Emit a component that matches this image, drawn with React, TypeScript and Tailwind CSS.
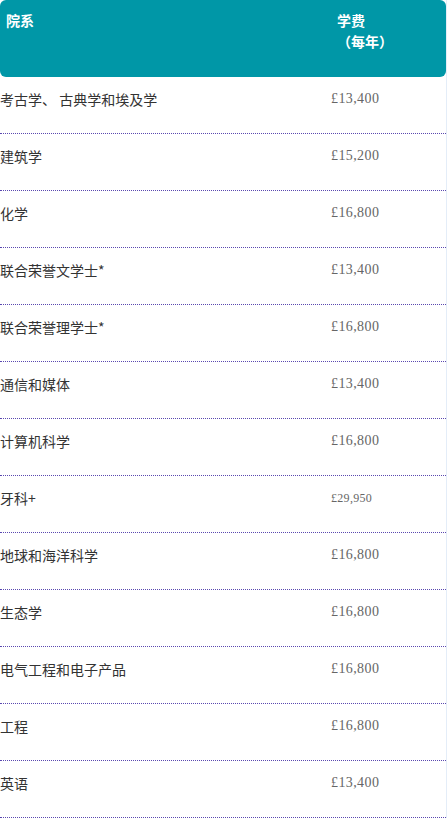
import React from "react";

const rows: { name: string; fee: string; small?: boolean }[] = [
  { name: "考古学、 古典学和埃及学", fee: "£13,400" },
  { name: "建筑学", fee: "£15,200" },
  { name: "化学", fee: "£16,800" },
  { name: "联合荣誉文学士*", fee: "£13,400" },
  { name: "联合荣誉理学士*", fee: "£16,800" },
  { name: "通信和媒体", fee: "£13,400" },
  { name: "计算机科学", fee: "£16,800" },
  { name: "牙科+", fee: "£29,950", small: true },
  { name: "地球和海洋科学", fee: "£16,800" },
  { name: "生态学", fee: "£16,800" },
  { name: "电气工程和电子产品", fee: "£16,800" },
  { name: "工程", fee: "£16,800" },
  { name: "英语", fee: "£13,400" },
];

const cjk = { fontFamily: '"Noto Sans CJK SC", "Noto Sans", sans-serif' };
const serif = { fontFamily: '"Liberation Serif", "Noto Sans CJK SC", serif' };

export default function App() {
  return (
    <div className="w-[448px] h-[818px] bg-white overflow-hidden">
      <div className="w-[447px] border-r border-[#e4edf8] h-[818px]">
        <div className="w-[446px] h-[77px] bg-[#0097a7] rounded-[6px] flex text-white font-bold text-[14px] leading-[21px] pt-[10px]" style={cjk}>
          <div className="w-[331px] pl-[6px]">院系</div>
          <div className="pl-[6px]">
            <div>学费</div>
            <div>（每年）</div>
          </div>
        </div>
        {rows.map((r) => (
          <div
            key={r.name}
            className="w-[446px] h-[57px] flex border-b border-dotted border-[#5a48b0] pt-[12px]"
          >
            <div className="w-[331px] text-[14px] leading-[20px] text-[#333] font-normal" style={cjk}>
              {r.name}
            </div>
            <div
              className={`${r.small ? "text-[12px] tracking-[0.3px]" : "text-[14px] tracking-[0.4px]"} leading-[20px] text-[#666]`}
              style={serif}
            >
              {r.fee}
            </div>
          </div>
        ))}
      </div>
    </div>
  );
}
